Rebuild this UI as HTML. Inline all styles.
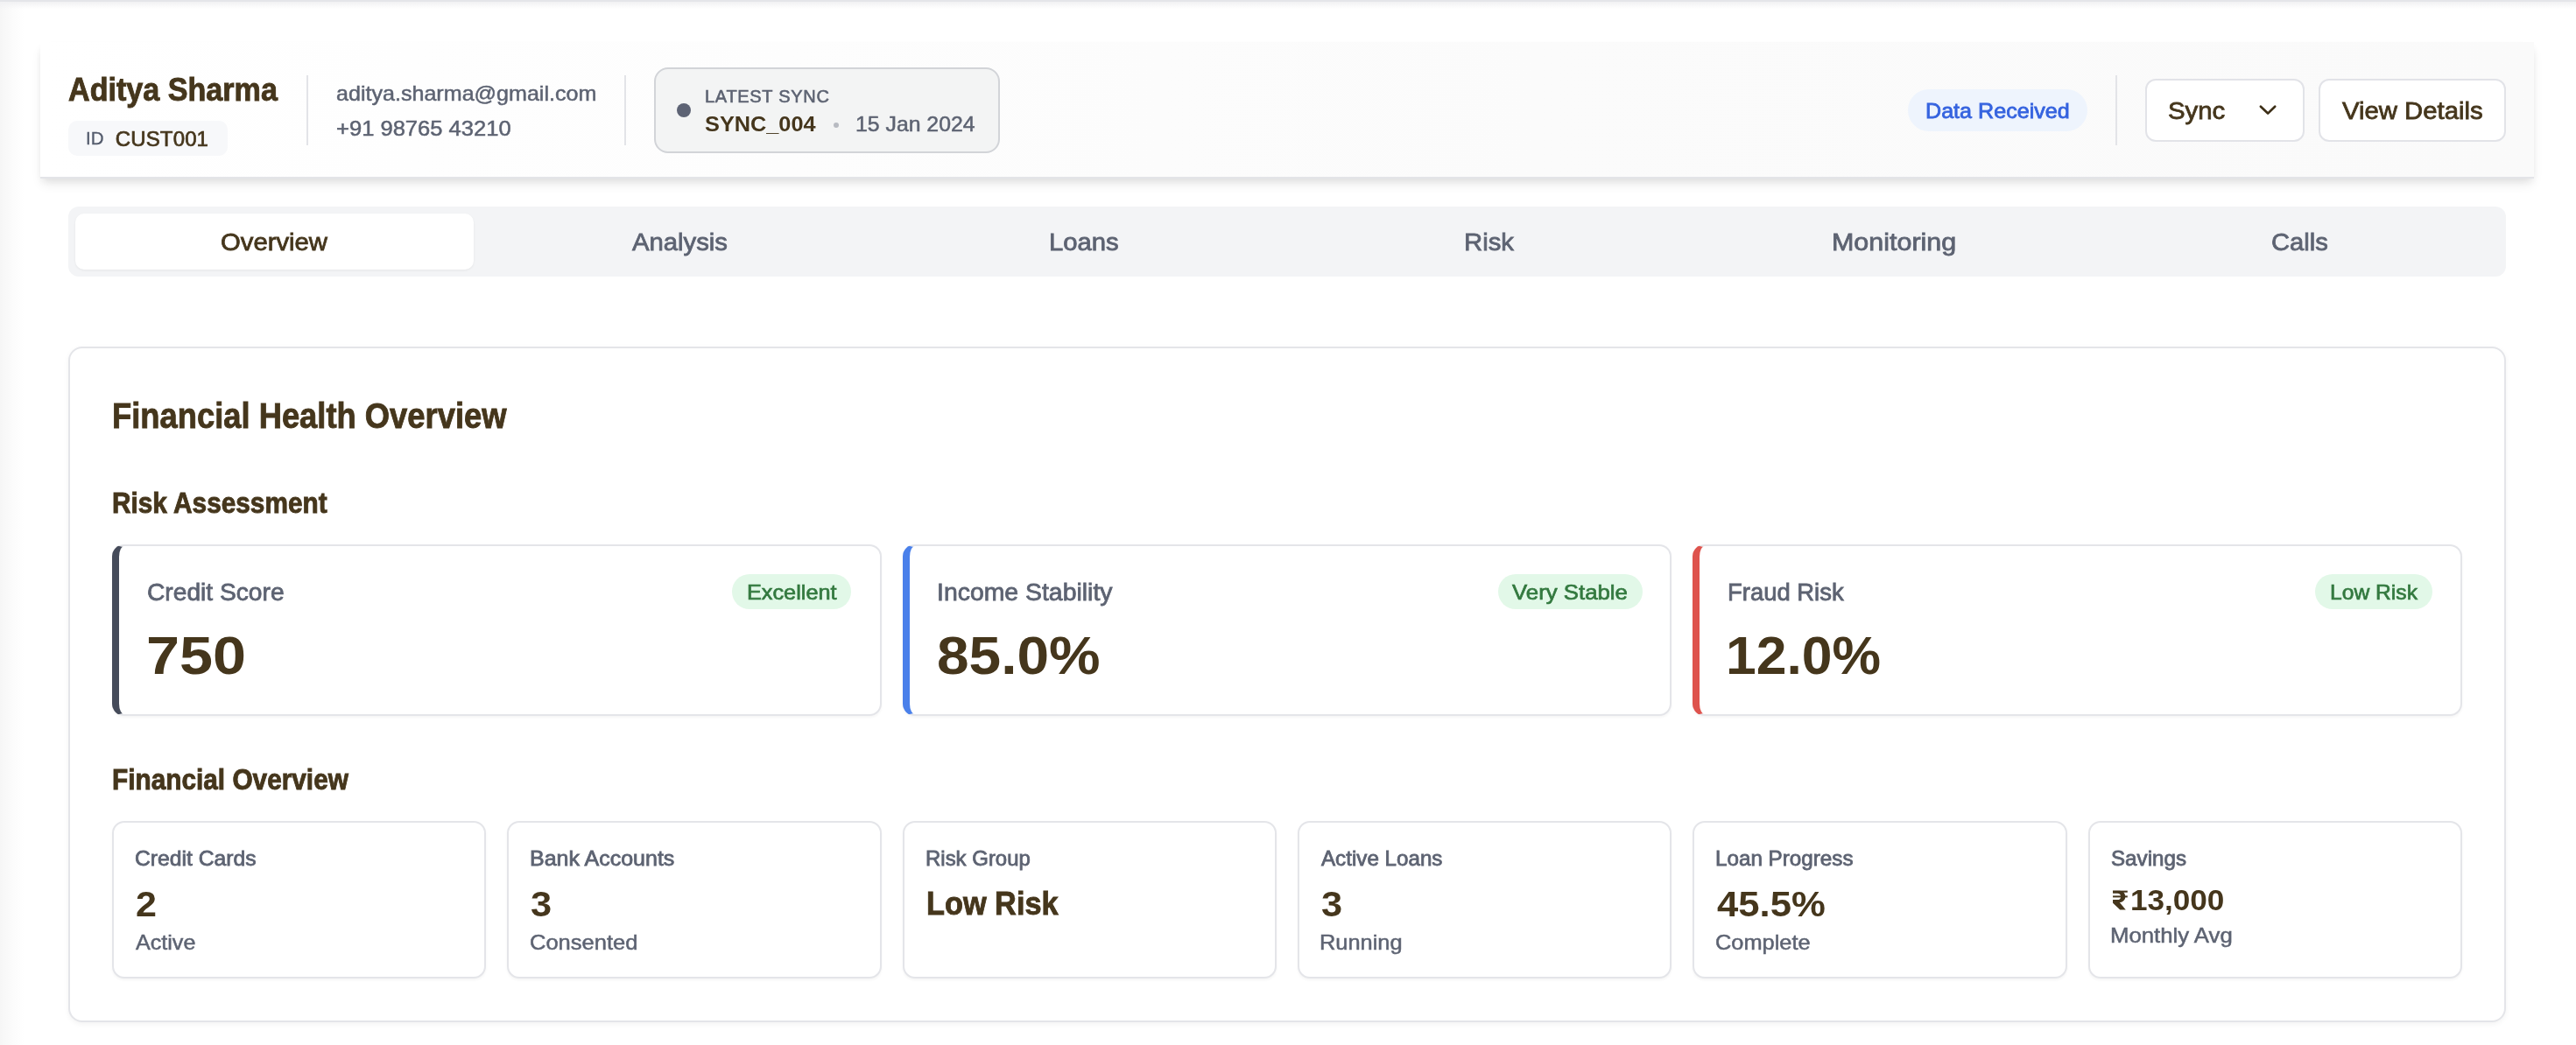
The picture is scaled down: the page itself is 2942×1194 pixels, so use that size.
<!DOCTYPE html>
<html><head><meta charset="utf-8"><title>Customer Overview</title>
<style>
html,body{margin:0;padding:0;background:#fff;width:2942px;height:1194px;overflow:hidden}
body{position:relative;font-family:"Liberation Sans", sans-serif;will-change:transform}
.t{position:absolute;white-space:nowrap;line-height:1;transform-origin:0 0}
.b{position:absolute}
</style></head><body>
<div class="b" style="left:0px;top:0px;width:30px;height:1194px;background:linear-gradient(90deg,#f6f6f6 0px,#f9f9f9 8px,#fcfcfc 16px,rgba(255,255,255,0) 28px)"></div>
<div class="b" style="left:0px;top:0px;width:2942px;height:2px;background:#e4e5e9"></div>
<div class="b" style="left:0px;top:2px;width:2942px;height:8px;background:linear-gradient(#f1f1f3,rgba(255,255,255,0))"></div>
<div class="b" style="left:46px;top:48px;width:2848px;height:156px;background:linear-gradient(90deg,#ffffff 0%,#fbfbfb 60%,#fafafa 100%);border-bottom:2px solid #e3e4e8;box-sizing:border-box;box-shadow:0 8px 12px -2px rgba(0,0,0,0.09),0 4px 8px -2px rgba(0,0,0,0.06)"></div>
<div class="b" style="left:78px;top:138px;width:182px;height:40px;background:#f7f8fa;border-radius:10px"></div>
<div class="b" style="left:350px;top:86px;width:2px;height:80px;background:#e3e4e8"></div>
<div class="b" style="left:713px;top:86px;width:2px;height:80px;background:#e3e4e8"></div>
<div class="b" style="left:747px;top:77px;width:395px;height:98px;background:#f3f4f4;border:2px solid #d2d4d8;border-radius:16px;box-sizing:border-box"></div>
<div class="b" style="left:773px;top:118px;width:16px;height:16px;background:#5d6374;border-radius:50%"></div>
<div class="b" style="left:952px;top:140px;width:6px;height:6px;background:#b7bac1;border-radius:50%"></div>
<div class="b" style="left:2179px;top:102px;width:205px;height:48px;background:#eef4fd;border-radius:24px"></div>
<div class="b" style="left:2416px;top:86px;width:2px;height:80px;background:#e3e4e8"></div>
<div class="b" style="left:2450px;top:90px;width:182px;height:72px;background:#fff;border:2px solid #e2e3e8;border-radius:12px;box-sizing:border-box"></div>
<svg class="b" style="left:2578px;top:119px" width="24" height="14" viewBox="0 0 24 14"><polyline points="3.9,2.8 12.1,10.6 20.2,2.8" fill="none" stroke="#3d2f17" stroke-width="2.7" stroke-linecap="round" stroke-linejoin="round"/></svg>
<div class="b" style="left:2648px;top:90px;width:214px;height:72px;background:#fff;border:2px solid #e2e3e8;border-radius:12px;box-sizing:border-box"></div>
<div class="b" style="left:78px;top:236px;width:2784px;height:80px;background:#f3f4f6;border-radius:12px"></div>
<div class="b" style="left:86px;top:244px;width:455px;height:64px;background:#fff;border-radius:10px;box-shadow:0 1px 3px rgba(0,0,0,0.06)"></div>
<div class="b" style="left:78px;top:396px;width:2784px;height:772px;background:#fff;border:2px solid #e4e5e9;border-radius:16px;box-sizing:border-box;box-shadow:0 2px 6px rgba(0,0,0,0.05)"></div>
<div class="b" style="left:128.0px;top:622px;width:878.7px;height:196px;background:#fff;border:2px solid #e4e5e9;border-left:8px solid #454b5a;border-radius:14px;box-sizing:border-box;box-shadow:0 2px 3px rgba(0,0,0,0.04)"></div>
<div class="b" style="left:836px;top:656px;width:136px;height:40px;background:#e2f8e8;border-radius:20px"></div>
<div class="b" style="left:1030.7px;top:622px;width:878.7px;height:196px;background:#fff;border:2px solid #e4e5e9;border-left:8px solid #4a80ea;border-radius:14px;box-sizing:border-box;box-shadow:0 2px 3px rgba(0,0,0,0.04)"></div>
<div class="b" style="left:1710.5px;top:656px;width:165px;height:40px;background:#e2f8e8;border-radius:20px"></div>
<div class="b" style="left:1933.3px;top:622px;width:878.7px;height:196px;background:#fff;border:2px solid #e4e5e9;border-left:8px solid #de534d;border-radius:14px;box-sizing:border-box;box-shadow:0 2px 3px rgba(0,0,0,0.04)"></div>
<div class="b" style="left:2644px;top:656px;width:134px;height:40px;background:#e2f8e8;border-radius:20px"></div>
<div class="b" style="left:128.0px;top:938px;width:427.3px;height:180px;background:#fff;border:2px solid #e4e5e9;border-radius:14px;box-sizing:border-box;box-shadow:0 2px 3px rgba(0,0,0,0.04)"></div>
<div class="b" style="left:579.3px;top:938px;width:427.3px;height:180px;background:#fff;border:2px solid #e4e5e9;border-radius:14px;box-sizing:border-box;box-shadow:0 2px 3px rgba(0,0,0,0.04)"></div>
<div class="b" style="left:1030.7px;top:938px;width:427.3px;height:180px;background:#fff;border:2px solid #e4e5e9;border-radius:14px;box-sizing:border-box;box-shadow:0 2px 3px rgba(0,0,0,0.04)"></div>
<div class="b" style="left:1482.0px;top:938px;width:427.3px;height:180px;background:#fff;border:2px solid #e4e5e9;border-radius:14px;box-sizing:border-box;box-shadow:0 2px 3px rgba(0,0,0,0.04)"></div>
<div class="b" style="left:1933.3px;top:938px;width:427.3px;height:180px;background:#fff;border:2px solid #e4e5e9;border-radius:14px;box-sizing:border-box;box-shadow:0 2px 3px rgba(0,0,0,0.04)"></div>
<div class="b" style="left:2384.7px;top:938px;width:427.3px;height:180px;background:#fff;border:2px solid #e4e5e9;border-radius:14px;box-sizing:border-box;box-shadow:0 2px 3px rgba(0,0,0,0.04)"></div>
<svg class="b" style="left:2405px;top:1010px" width="40" height="35" viewBox="0 0 1194 1045"><g fill="#45361c"><rect x="240" y="228" width="500" height="62"/><rect x="240" y="400" width="500" height="60"/><path d="M240 228H470C595 228 665 320 665 430C665 548 578 628 450 628H240V540H395C468 540 512 496 512 430C512 364 468 320 395 320H240Z"/><path d="M240 600H445L680 882H485L240 652Z"/></g></svg>
<div class="t" style="left:78.28px;top:84.48px;font-size:37px;font-weight:bold;color:#45361c;-webkit-text-stroke:0.9px #45361c;transform:scaleX(0.9220);">Aditya Sharma</div>
<div class="t" style="left:98.00px;top:147.65px;font-size:20.5px;font-weight:normal;color:#535b6c;-webkit-text-stroke:0.3px #535b6c;">ID</div>
<div class="t" style="left:131.80px;top:147.38px;font-size:24px;font-weight:normal;color:#45361c;-webkit-text-stroke:0.7px #45361c;letter-spacing:0.133px;">CUST001</div>
<div class="t" style="left:383.95px;top:94.58px;font-size:24px;font-weight:normal;color:#5d6372;-webkit-text-stroke:0.5px #5d6372;transform:scaleX(1.0454);">aditya.sharma@gmail.com</div>
<div class="t" style="left:383.94px;top:135.48px;font-size:24px;font-weight:normal;color:#5d6372;-webkit-text-stroke:0.5px #5d6372;transform:scaleX(1.0645);">+91 98765 43210</div>
<div class="t" style="left:805.00px;top:100.37px;font-size:20px;font-weight:normal;color:#5d6372;-webkit-text-stroke:0.6px #5d6372;letter-spacing:0.700px;">LATEST SYNC</div>
<div class="t" style="left:804.97px;top:130.16px;font-size:24.5px;font-weight:bold;color:#45361c;transform:scaleX(1.0328);">SYNC_004</div>
<div class="t" style="left:976.97px;top:129.68px;font-size:24px;font-weight:normal;color:#5d6372;-webkit-text-stroke:0.5px #5d6372;transform:scaleX(1.0336);">15 Jan 2024</div>
<div class="t" style="left:2198.97px;top:115.26px;font-size:24.5px;font-weight:normal;color:#3563df;-webkit-text-stroke:0.8px #3563df;transform:scaleX(1.0252);">Data Received</div>
<div class="t" style="left:2475.95px;top:113.10px;font-size:28px;font-weight:normal;color:#45361c;-webkit-text-stroke:0.8px #45361c;transform:scaleX(1.0492);">Sync</div>
<div class="t" style="left:2675.40px;top:113.30px;font-size:28px;font-weight:normal;color:#45361c;-webkit-text-stroke:0.8px #45361c;transform:scaleX(1.0458);">View Details</div>
<div class="t" style="left:251.69px;top:263.10px;font-size:28px;font-weight:normal;color:#45361c;-webkit-text-stroke:0.8px #45361c;transform:scaleX(1.0448);">Overview</div>
<div class="t" style="left:721.67px;top:263.10px;font-size:28px;font-weight:normal;color:#5d6372;-webkit-text-stroke:0.8px #5d6372;transform:scaleX(1.0448);">Analysis</div>
<div class="t" style="left:1197.92px;top:263.10px;font-size:28px;font-weight:normal;color:#5d6372;-webkit-text-stroke:0.8px #5d6372;transform:scaleX(1.0448);">Loans</div>
<div class="t" style="left:1671.56px;top:263.10px;font-size:28px;font-weight:normal;color:#5d6372;-webkit-text-stroke:0.8px #5d6372;transform:scaleX(1.0448);">Risk</div>
<div class="t" style="left:2092.22px;top:263.10px;font-size:28px;font-weight:normal;color:#5d6372;-webkit-text-stroke:0.8px #5d6372;transform:scaleX(1.0875);">Monitoring</div>
<div class="t" style="left:2593.88px;top:263.10px;font-size:28px;font-weight:normal;color:#5d6372;-webkit-text-stroke:0.8px #5d6372;transform:scaleX(1.0410);">Calls</div>
<div class="t" style="left:128.24px;top:455.19px;font-size:41px;font-weight:bold;color:#45361c;-webkit-text-stroke:0.9px #45361c;transform:scaleX(0.8865);">Financial Health Overview</div>
<div class="t" style="left:128.39px;top:557.87px;font-size:33px;font-weight:bold;color:#45361c;-webkit-text-stroke:0.9px #45361c;transform:scaleX(0.9026);">Risk Assessment</div>
<div class="t" style="left:127.59px;top:874.47px;font-size:33px;font-weight:bold;color:#45361c;-webkit-text-stroke:0.9px #45361c;transform:scaleX(0.9027);">Financial Overview</div>
<div class="t" style="left:168.11px;top:661.67px;font-size:28.5px;font-weight:normal;color:#5d6372;-webkit-text-stroke:0.8px #5d6372;transform:scaleX(0.9885);">Credit Score</div>
<div class="t" style="left:167.09px;top:717.52px;font-size:62px;font-weight:bold;color:#45361c;transform:scaleX(1.1030);">750</div>
<div class="t" style="left:852.57px;top:665.26px;font-size:24.5px;font-weight:normal;color:#33793f;-webkit-text-stroke:0.7px #33793f;transform:scaleX(1.0313);">Excellent</div>
<div class="t" style="left:1070.21px;top:661.67px;font-size:28.5px;font-weight:normal;color:#5d6372;-webkit-text-stroke:0.8px #5d6372;transform:scaleX(0.9965);">Income Stability</div>
<div class="t" style="left:1069.88px;top:717.52px;font-size:62px;font-weight:bold;color:#45361c;transform:scaleX(1.0616);">85.0%</div>
<div class="t" style="left:1727.40px;top:665.26px;font-size:24.5px;font-weight:normal;color:#33793f;-webkit-text-stroke:0.7px #33793f;transform:scaleX(1.0528);">Very Stable</div>
<div class="t" style="left:1972.98px;top:661.67px;font-size:28.5px;font-weight:normal;color:#5d6372;-webkit-text-stroke:0.8px #5d6372;transform:scaleX(0.9625);">Fraud Risk</div>
<div class="t" style="left:1970.87px;top:717.52px;font-size:62px;font-weight:bold;color:#45361c;transform:scaleX(1.0065);">12.0%</div>
<div class="t" style="left:2660.99px;top:665.26px;font-size:24.5px;font-weight:normal;color:#33793f;-webkit-text-stroke:0.7px #33793f;transform:scaleX(1.0061);">Low Risk</div>
<div class="t" style="left:153.97px;top:968.58px;font-size:24px;font-weight:normal;color:#5d6372;-webkit-text-stroke:0.8px #5d6372;transform:scaleX(1.0293);">Credit Cards</div>
<div class="t" style="left:154.76px;top:1011.87px;font-size:41.5px;font-weight:bold;color:#45361c;transform:scaleX(1.0381);">2</div>
<div class="t" style="left:155.00px;top:1064.68px;font-size:24px;font-weight:normal;color:#5d6372;-webkit-text-stroke:0.5px #5d6372;transform:scaleX(1.0462);">Active</div>
<div class="t" style="left:604.76px;top:968.58px;font-size:24px;font-weight:normal;color:#5d6372;-webkit-text-stroke:0.8px #5d6372;transform:scaleX(1.0414);">Bank Accounts</div>
<div class="t" style="left:605.95px;top:1011.87px;font-size:41.5px;font-weight:bold;color:#45361c;transform:scaleX(1.0451);">3</div>
<div class="t" style="left:604.74px;top:1064.68px;font-size:24px;font-weight:normal;color:#5d6372;-webkit-text-stroke:0.5px #5d6372;transform:scaleX(1.0632);">Consented</div>
<div class="t" style="left:1056.70px;top:968.58px;font-size:24px;font-weight:normal;color:#5d6372;-webkit-text-stroke:0.8px #5d6372;transform:scaleX(0.9983);">Risk Group</div>
<div class="t" style="left:1057.77px;top:1014.07px;font-size:37.6px;font-weight:bold;color:#45361c;-webkit-text-stroke:0.9px #45361c;transform:scaleX(0.9129);">Low Risk</div>
<div class="t" style="left:1509.00px;top:968.58px;font-size:24px;font-weight:normal;color:#5d6372;-webkit-text-stroke:0.8px #5d6372;transform:scaleX(1.0073);">Active Loans</div>
<div class="t" style="left:1508.95px;top:1011.87px;font-size:41.5px;font-weight:bold;color:#45361c;transform:scaleX(1.0451);">3</div>
<div class="t" style="left:1506.88px;top:1064.68px;font-size:24px;font-weight:normal;color:#5d6372;-webkit-text-stroke:0.5px #5d6372;transform:scaleX(1.0581);">Running</div>
<div class="t" style="left:1958.99px;top:968.58px;font-size:24px;font-weight:normal;color:#5d6372;-webkit-text-stroke:0.8px #5d6372;transform:scaleX(1.0090);">Loan Progress</div>
<div class="t" style="left:1960.80px;top:1011.87px;font-size:41.5px;font-weight:bold;color:#45361c;transform:scaleX(1.0521);">45.5%</div>
<div class="t" style="left:1959.24px;top:1064.68px;font-size:24px;font-weight:normal;color:#5d6372;-webkit-text-stroke:0.5px #5d6372;transform:scaleX(1.0574);">Complete</div>
<div class="t" style="left:2410.79px;top:968.58px;font-size:24px;font-weight:normal;color:#5d6372;-webkit-text-stroke:0.8px #5d6372;transform:scaleX(1.0071);">Savings</div>
<div class="t" style="left:2410.26px;top:1056.58px;font-size:24px;font-weight:normal;color:#5d6372;-webkit-text-stroke:0.5px #5d6372;transform:scaleX(1.0724);">Monthly Avg</div>
<div class="t" style="left:2432.72px;top:1011.59px;font-size:33.8px;font-weight:bold;color:#45361c;transform:scaleX(1.0390);">13,000</div>
</body></html>
